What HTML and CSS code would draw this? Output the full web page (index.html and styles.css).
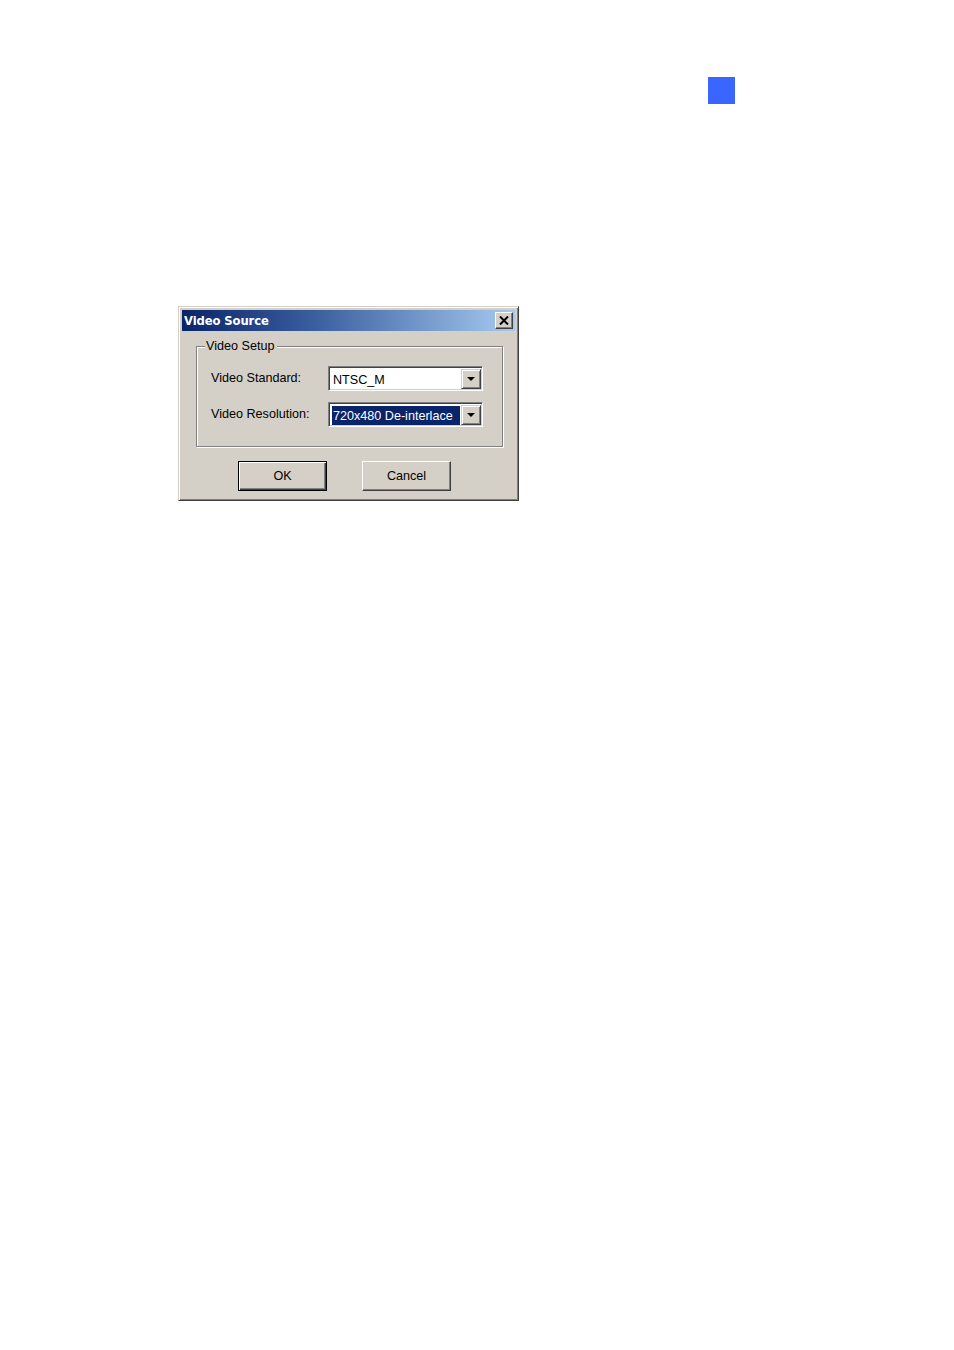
FILE: index.html
```html
<!DOCTYPE html>
<html>
<head>
<meta charset="utf-8">
<title>Video Source</title>
<link rel="stylesheet" href="styles.css">
</head>
<body>
<div class="page">
  <div class="marker"></div>
  <div class="dialog">
    <div class="titlebar">
      <span class="title">Video Source</span>
      <span class="close">
        <svg width="10" height="9" viewBox="0 0 10 9"><path d="M1 0.5 L9 8.5 M9 0.5 L1 8.5" stroke="#000" stroke-width="2" fill="none"/></svg>
      </span>
    </div>
    <div class="body">
      <div class="group">
        <span class="legend">Video Setup</span>
        <div class="row">
          <span class="label">Video Standard:</span>
          <div class="combo">
            <div class="field"><span class="value">NTSC_M</span></div>
            <span class="drop"><svg width="8" height="4" viewBox="0 0 8 4"><path d="M0 0 H8 L4 4 Z" fill="#000"/></svg></span>
          </div>
        </div>
        <div class="row">
          <span class="label">Video Resolution:</span>
          <div class="combo">
            <div class="field"><span class="value selected">720x480 De-interlace</span></div>
            <span class="drop"><svg width="8" height="4" viewBox="0 0 8 4"><path d="M0 0 H8 L4 4 Z" fill="#000"/></svg></span>
          </div>
        </div>
      </div>
      <div class="buttons">
        <button class="btn default">OK</button>
        <button class="btn">Cancel</button>
      </div>
    </div>
  </div>
</div>
</body>
</html>
```

FILE: styles.css
```css
html, body {
  margin: 0;
  padding: 0;
  background: #fff;
}
.page {
  width: 954px;
  height: 1350px;
  display: flex;
  flex-direction: column;
  align-items: flex-start;
}
.marker {
  width: 27px;
  height: 27px;
  background: #3a66ff;
  margin: 77px 0 0 708px;
}
.dialog {
  margin: 202px 0 0 178px;
  width: 341px;
  height: 195px;
  box-sizing: border-box;
  background: #d4d0c8;
  border: 1px solid;
  border-color: #d4d0c8 #404040 #404040 #d4d0c8;
  box-shadow: inset 1px 1px 0 #fff, inset -1px -1px 0 #808080;
  padding: 3px;
  display: flex;
  flex-direction: column;
  font-family: "Liberation Sans", Arial, sans-serif;
  font-size: 12.6px;
  color: #000;
}
.titlebar {
  height: 21px;
  flex: none;
  background: linear-gradient(to right, #0a246a 0%, #3a5f9f 40%, #a6caf0 100%);
  display: flex;
  align-items: center;
  justify-content: space-between;
  padding: 0 2px 0 2px;
}
.title {
  font-family: "DejaVu Sans", Verdana, sans-serif;
  font-weight: bold;
  font-size: 11.6px;
  color: #fff;
  letter-spacing: -0.1px;
}
.close {
  width: 18px;
  height: 17px;
  box-sizing: border-box;
  background: #d4d0c8;
  border: 1px solid;
  border-color: #fff #404040 #404040 #fff;
  box-shadow: inset -1px -1px 0 #808080;
  display: flex;
  align-items: center;
  justify-content: center;
  padding-bottom: 1px;
}
.body {
  flex: 1;
  display: flex;
  flex-direction: column;
}
.group {
  position: relative;
  margin: 15px 12px 0 14px;
  height: 101px;
  box-sizing: border-box;
  border: 1px solid #808080;
  box-shadow: 1px 1px 0 #fff, inset 1px 1px 0 #fff;
  padding: 19px 0 0 14px;
  display: flex;
  flex-direction: column;
  gap: 11px;
}
.legend {
  position: absolute;
  left: 8px;
  top: -8px;
  padding: 0 3px 0 1px;
  background: #d4d0c8;
  line-height: 15px;
}
.row {
  display: flex;
  align-items: center;
  height: 25px;
}
.label {
  width: 117px;
  flex: none;
  padding-bottom: 1px;
}
.combo {
  width: 155px;
  height: 25px;
  box-sizing: border-box;
  border: 1px solid;
  border-color: #808080 #fff #fff #808080;
  box-shadow: inset 1px 1px 0 #404040, inset -1px -1px 0 #d4d0c8;
  padding: 2px 1px 1px 2px;
  background: #fff;
  display: flex;
}
.field {
  flex: 1;
  display: flex;
  align-items: stretch;
  padding: 1px 1px 0 1px;
}
.value {
  display: flex;
  align-items: center;
  padding: 1px 1px 0 1px;
  line-height: 18px;
}
.value.selected {
  flex: 1;
  background: #0a246a;
  color: #fff;
}
.drop {
  width: 20px;
  height: 20px;
  flex: none;
  box-sizing: border-box;
  background: #d4d0c8;
  border: 1px solid;
  border-color: #d4d0c8 #404040 #404040 #d4d0c8;
  box-shadow: inset 1px 1px 0 #fff, inset -1px -1px 0 #808080;
  display: flex;
  align-items: center;
  justify-content: center;
}
.buttons {
  display: flex;
  gap: 35px;
  margin: 14px 0 0 56px;
}
.btn {
  width: 89px;
  height: 30px;
  box-sizing: border-box;
  background: #d4d0c8;
  font-family: "Liberation Sans", Arial, sans-serif;
  font-size: 12.6px;
  color: #000;
  border: 1px solid;
  border-color: #fff #404040 #404040 #fff;
  box-shadow: inset -1px -1px 0 #808080, inset 1px 1px 0 #d4d0c8;
  padding: 0;
  margin: 0;
}
.btn.default {
  border: 1px solid #000;
  box-shadow: inset 1px 1px 0 #fff, inset -1px -1px 0 #404040, inset -2px -2px 0 #808080;
}
```
